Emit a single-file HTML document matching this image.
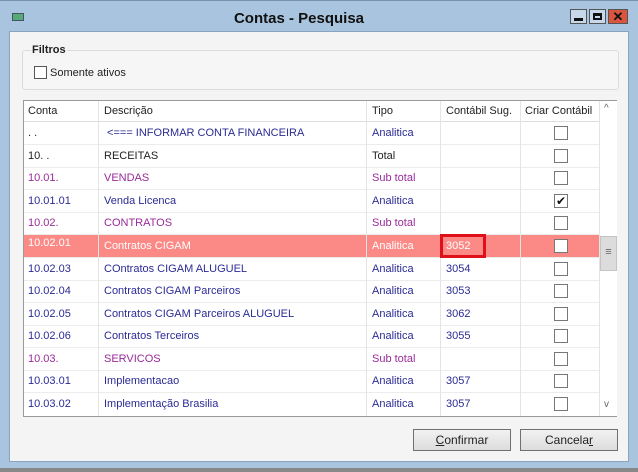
<!DOCTYPE html>
<html><head><style>
*{margin:0;padding:0;box-sizing:border-box}
body{width:638px;height:472px;background:#a9c4de;font-family:"Liberation Sans",sans-serif;font-size:11px;position:relative;overflow:hidden;color:#222}
.abs{position:absolute}
.title{left:0;top:0;width:638px;height:31px;background:#a9c4de;border-top:1px solid #7a93ad}
.title .t{left:0;width:598px;top:9px;text-align:center;font-weight:bold;font-size:15px;color:#111}
.body{left:9px;top:31px;width:620px;height:431px;background:#f4f4f4;border:1px solid #8aa4bf}
.grp{left:22px;top:50px;width:597px;height:40px;border:1px solid #dcdcdc;border-radius:3px;background:#f6f6f6}
.cb{width:13px;height:13px;border:1px solid #555;background:#fff}
.grid{left:23px;top:100px;width:594px;height:317px;border:1px solid #999;background:#fff}
.row{position:absolute;left:0;width:575px;height:23px;border-bottom:1px solid #ececec}
.row div{position:absolute;top:5px;white-space:nowrap}
.c1{left:4px}.c2{left:80px}.c3{left:348px}.c4{left:422px}
.vl{position:absolute;top:0;width:1px;height:315px;background:#e4e4e4}
.b{color:#2b2b95}.p{color:#9a2a9a}.k{color:#222}
.sel{background:#fb8a86}.sel div{color:#fff}
.ck{position:absolute;left:530px;top:4px!important;width:14px;height:14px;border:1px solid #777;background:#fff}
.btn{height:22px;border:1px solid #707070;background:linear-gradient(#f2f2f2,#dcdcdc);text-align:center;line-height:20px;font-size:12px}
.wb{top:8px;width:17px;height:15px;border:1px solid #555;background:#c6d8ea}
</style></head><body>
<div class="abs title">
 <div class="abs" style="left:12px;top:12px;width:12px;height:8px;background:#5a7;border:1px solid #456"></div>
 <div class="abs t">Contas - Pesquisa</div>
 <div class="abs wb" style="left:570px"><div class="abs" style="left:3px;top:8px;width:9px;height:3px;background:#111"></div></div>
 <div class="abs wb" style="left:589px"><div class="abs" style="left:3px;top:3px;width:9px;height:7px;border:2px solid #111;border-top-width:3px"></div></div>
 <div class="abs wb" style="left:608px;width:20px;background:#d9553e;color:#111;font-weight:bold;text-align:center;line-height:13px;font-size:13px">✕</div>
</div>
<div class="abs body"></div>
<div class="abs grp"></div>
<div class="abs" style="left:31px;top:44px;font-weight:bold;background:#f4f4f4;padding:0 1px">Filtros</div>
<div class="abs cb" style="left:34px;top:66px"></div>
<div class="abs" style="left:50px;top:67px">Somente ativos</div>
<div class="abs grid">
 <div class="row" style="top:0;height:21px;border-bottom:1px solid #ddd"><div class="c1" style="top:4px">Conta</div><div class="c2" style="top:4px">Descrição</div><div class="c3" style="top:4px">Tipo</div><div class="c4" style="top:4px">Contábil Sug.</div><div style="left:501px;top:4px">Criar Contábil</div></div>
 <div class="row" style="top:21px"><div class="c1 k">. .</div><div class="c2 b">&nbsp;&lt;=== INFORMAR CONTA FINANCEIRA</div><div class="c3 b">Analitica</div><div class="ck"></div></div>
 <div class="row" style="top:44px"><div class="c1 k">10. .</div><div class="c2 k">RECEITAS</div><div class="c3 k">Total</div><div class="ck"></div></div>
 <div class="row" style="top:66px"><div class="c1 p">10.01.</div><div class="c2 p">VENDAS</div><div class="c3 p">Sub total</div><div class="ck"></div></div>
 <div class="row" style="top:89px"><div class="c1 b">10.01.01</div><div class="c2 b">Venda Licenca</div><div class="c3 b">Analitica</div><div class="ck" style="font-size:12px;line-height:12px;text-align:center;color:#111">✔</div></div>
 <div class="row" style="top:111px"><div class="c1 p">10.02.</div><div class="c2 p">CONTRATOS</div><div class="c3 p">Sub total</div><div class="ck"></div></div>
 <div class="row sel" style="top:134px"><div class="c1" style="top:2px">10.02.01</div><div class="c2">Contratos CIGAM</div><div class="c3">Analitica</div><div class="c4">3052</div><div class="ck"></div></div>
 <div class="row" style="top:157px"><div class="c1 b">10.02.03</div><div class="c2 b">COntratos CIGAM ALUGUEL</div><div class="c3 b">Analitica</div><div class="c4 b">3054</div><div class="ck"></div></div>
 <div class="row" style="top:179px"><div class="c1 b">10.02.04</div><div class="c2 b">Contratos CIGAM Parceiros</div><div class="c3 b">Analitica</div><div class="c4 b">3053</div><div class="ck"></div></div>
 <div class="row" style="top:202px"><div class="c1 b">10.02.05</div><div class="c2 b">Contratos CIGAM Parceiros ALUGUEL</div><div class="c3 b">Analitica</div><div class="c4 b">3062</div><div class="ck"></div></div>
 <div class="row" style="top:224px"><div class="c1 b">10.02.06</div><div class="c2 b">Contratos Terceiros</div><div class="c3 b">Analitica</div><div class="c4 b">3055</div><div class="ck"></div></div>
 <div class="row" style="top:247px"><div class="c1 p">10.03.</div><div class="c2 p">SERVICOS</div><div class="c3 p">Sub total</div><div class="ck"></div></div>
 <div class="row" style="top:269px"><div class="c1 b">10.03.01</div><div class="c2 b">Implementacao</div><div class="c3 b">Analitica</div><div class="c4 b">3057</div><div class="ck"></div></div>
 <div class="row" style="top:292px;border-bottom:none"><div class="c1 b">10.03.02</div><div class="c2 b">Implementação Brasilia</div><div class="c3 b">Analitica</div><div class="c4 b">3057</div><div class="ck"></div></div>
 <div class="vl" style="left:74px"></div><div class="vl" style="left:342px"></div><div class="vl" style="left:416px"></div><div class="vl" style="left:496px"></div>
 <div class="abs" style="left:416px;top:133px;width:46px;height:24px;border:3px solid #e0101a"></div>
 <div class="abs" style="left:575px;top:0;width:18px;height:315px;background:#fff;border-left:1px solid #e4e4e4"></div>
 <div class="abs" style="left:580px;top:2px;font-size:10px;color:#666">^</div>
 <div class="abs" style="left:576px;top:135px;width:17px;height:35px;background:#dcdcdc;border:1px solid #c4c4c4;text-align:center;line-height:30px;color:#666">≡</div>
 <div class="abs" style="left:580px;top:298px;font-size:10px;color:#666">v</div>
</div>
<div class="abs btn" style="left:413px;top:429px;width:98px"><u>C</u>onfirmar</div>
<div class="abs btn" style="left:520px;top:429px;width:98px">Cancela<u>r</u></div>
<div class="abs" style="left:0;top:468px;width:638px;height:4px;background:#888"></div>
</body></html>
